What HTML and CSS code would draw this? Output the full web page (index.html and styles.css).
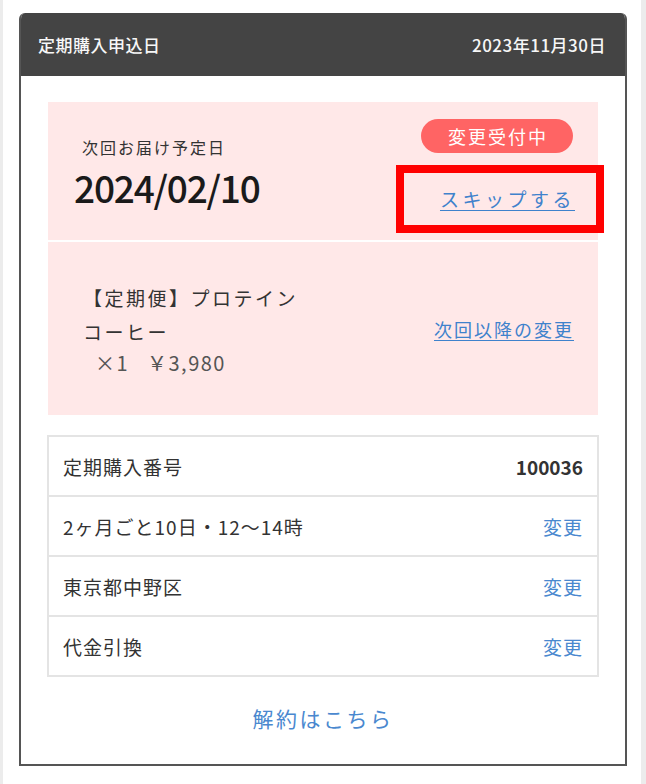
FILE: index.html
```html
<!DOCTYPE html>
<html>
<head>
    <title>定期購入</title>
    <link rel="stylesheet" href="styles.css">
</head>
<body>
<div class="page">
    <div class="card">
        <div class="card-header">
            <span class="header-label">定期購入申込日</span>
            <span class="header-date">2023年11月30日</span>
        </div>

        <div class="card-body">
            <div class="next-delivery">
                <div class="next-left">
                    <p class="next-label">次回お届け予定日</p>
                    <p class="next-date">2024/02/10</p>
                </div>
                <div class="next-right">
                    <span class="badge">変更受付中</span>
                    <a href="#" class="link skip-link">スキップする</a>
                </div>
                <!-- annotation box around the skip link -->
                <span class="highlight"></span>
            </div>

            <div class="product">
                <div class="product-info">
                    <p class="product-name">【定期便】プロテイン<br>コーヒー</p>
                    <p class="product-price">&nbsp;&nbsp;×1&nbsp;&nbsp; ￥3,980</p>
                </div>
                <a href="#" class="link">次回以降の変更</a>
            </div>

            <ul class="detail-list">
                <li class="detail-row">
                    <span>定期購入番号</span>
                    <span class="detail-value">100036</span>
                </li>
                <li class="detail-row">
                    <span>2ヶ月ごと10日・12〜14時</span>
                    <a href="#" class="change-link">変更</a>
                </li>
                <li class="detail-row">
                    <span>東京都中野区</span>
                    <a href="#" class="change-link">変更</a>
                </li>
                <li class="detail-row">
                    <span>代金引換</span>
                    <a href="#" class="change-link">変更</a>
                </li>
            </ul>

            <a href="#" class="cancel-link">解約はこちら</a>
        </div>
    </div>
</div>
</body>
</html>
```

FILE: styles.css
```css
body {
    margin: 0;
    padding: 0;
    background-color: #ffffff;
    font-family: "Noto Sans CJK JP", "Noto Sans", sans-serif;
    color: #333333;
}
p {
    margin: 0;
}
.page {
    height: 784px;
    box-sizing: border-box;
    border-left: 3px solid #ececec;
    border-right: 5px solid #ececec;
    padding-top: 13px;
}
.card {
    width: 608px;
    height: 753px;
    box-sizing: border-box;
    margin-left: 16px;
    border: 2px solid #555555;
    border-top: 0;
    border-radius: 6px 6px 0 0;
    overflow: hidden;
}
.card-header {
    height: 63px;
    background-color: #444444;
    color: #f7f7f7;
    display: flex;
    justify-content: space-between;
    align-items: center;
    padding: 0 19px 0 17px;
    font-size: 17px;
    font-weight: 500;
    letter-spacing: 0.5px;
}
.card-body {
    padding: 26px 26px 0;
}
.next-delivery {
    position: relative;
    margin: 0 1px;
    height: 138px;
    box-sizing: border-box;
    padding: 17px 25px 0 26px;
    background-color: #ffe8e8;
    display: flex;
    justify-content: space-between;
}
.next-label {
    margin: 16px 0 0 8px;
    font-size: 16px;
    letter-spacing: 2px;
    line-height: 24px;
}
.next-date {
    margin-top: 5px;
    font-size: 37px;
    font-weight: 500;
    line-height: 46px;
    letter-spacing: -1.2px;
    color: #1a1a1a;
}
.next-right {
    display: flex;
    flex-direction: column;
    align-items: flex-end;
}
.badge {
    display: block;
    height: 34px;
    line-height: 34px;
    padding: 0 25px 0 27px;
    border-radius: 17px;
    background-color: #ff6464;
    color: #ffffff;
    font-size: 18px;
    letter-spacing: 2px;
}
.link {
    color: #3f82cc;
    text-decoration: underline;
    text-underline-offset: 3px;
}
.skip-link {
    margin-top: 32px;
    margin-right: -2px;
    font-size: 19px;
    line-height: 28px;
    letter-spacing: 3.5px;
}
.highlight {
    position: absolute;
    left: 348px;
    top: 63px;
    width: 208px;
    height: 68px;
    box-sizing: border-box;
    border: 8px solid #ff0000;
}
.product {
    margin: 0 1px;
    height: 175px;
    box-sizing: border-box;
    border-top: 2px solid #ffffff;
    padding: 0 24px 0 35px;
    background-color: #ffe8e8;
    display: flex;
    justify-content: space-between;
    align-items: center;
}
.product-name {
    font-size: 19px;
    line-height: 34px;
    letter-spacing: 2.5px;
}
.product-price {
    font-size: 20px;
    line-height: 28px;
    letter-spacing: 1.5px;
    color: #555555;
}
.product .link {
    font-size: 18px;
    letter-spacing: 2px;
}
.detail-list {
    list-style: none;
    margin: 20px 0 0;
    padding: 0;
    border: 2px solid #e4e4e4;
}
.detail-row {
    height: 58px;
    display: flex;
    justify-content: space-between;
    align-items: center;
    padding: 0 14px 0 14px;
    font-size: 19px;
    letter-spacing: 1px;
    border-bottom: 2px solid #e4e4e4;
}
.detail-row:last-child {
    border-bottom: 0;
}
.detail-value {
    font-weight: bold;
    letter-spacing: 0;
}
.change-link {
    color: #4a88cf;
    text-decoration: none;
}
.cancel-link {
    display: block;
    margin-top: 25px;
    text-align: center;
    font-size: 21px;
    line-height: 32px;
    letter-spacing: 2.5px;
    color: #4a88cf;
    text-decoration: none;
}
```
